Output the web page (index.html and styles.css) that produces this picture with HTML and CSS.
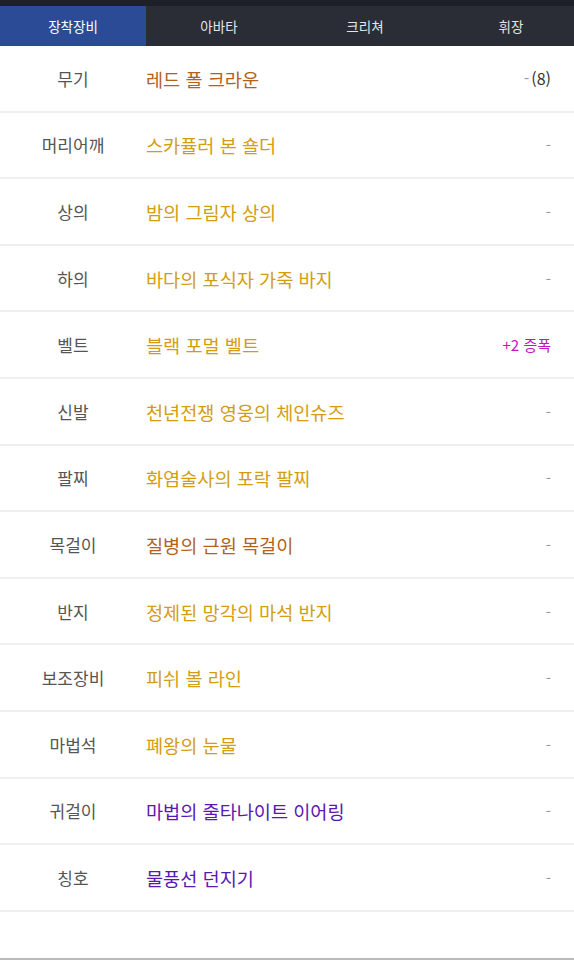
FILE: index.html
```html
<!DOCTYPE html>
<html lang="ko">
<head>
<meta charset="UTF-8">
<meta name="viewport" content="width=device-width, initial-scale=1.0">
<title>장착장비</title>
<link rel="stylesheet" href="styles.css">
</head>
<body>
<div class="top-deco"></div>
<div class="tabs">
  <div class="tab active">장착장비</div>
  <div class="tab">아바타</div>
  <div class="tab">크리쳐</div>
  <div class="tab">휘장</div>
</div>
<div class="equip-list">
  <div class="row">
    <div class="slot">무기</div>
    <div class="name unique">레드 폴 크라운</div>
    <div class="extra dark"><span class="dash">-</span>(8)</div>
  </div>
  <div class="row">
    <div class="slot">머리어깨</div>
    <div class="name epic">스카퓰러 본 숄더</div>
    <div class="extra">-</div>
  </div>
  <div class="row">
    <div class="slot">상의</div>
    <div class="name epic">밤의 그림자 상의</div>
    <div class="extra">-</div>
  </div>
  <div class="row">
    <div class="slot">하의</div>
    <div class="name epic">바다의 포식자 가죽 바지</div>
    <div class="extra">-</div>
  </div>
  <div class="row">
    <div class="slot">벨트</div>
    <div class="name epic">블랙 포멀 벨트</div>
    <div class="extra amp">+2 증폭</div>
  </div>
  <div class="row">
    <div class="slot">신발</div>
    <div class="name epic">천년전쟁 영웅의 체인슈즈</div>
    <div class="extra">-</div>
  </div>
  <div class="row">
    <div class="slot">팔찌</div>
    <div class="name epic">화염술사의 포락 팔찌</div>
    <div class="extra">-</div>
  </div>
  <div class="row">
    <div class="slot">목걸이</div>
    <div class="name unique">질병의 근원 목걸이</div>
    <div class="extra">-</div>
  </div>
  <div class="row">
    <div class="slot">반지</div>
    <div class="name epic">정제된 망각의 마석 반지</div>
    <div class="extra">-</div>
  </div>
  <div class="row">
    <div class="slot">보조장비</div>
    <div class="name epic">피쉬 볼 라인</div>
    <div class="extra">-</div>
  </div>
  <div class="row">
    <div class="slot">마법석</div>
    <div class="name epic">폐왕의 눈물</div>
    <div class="extra">-</div>
  </div>
  <div class="row">
    <div class="slot">귀걸이</div>
    <div class="name rare">마법의 줄타나이트 이어링</div>
    <div class="extra">-</div>
  </div>
  <div class="row">
    <div class="slot">칭호</div>
    <div class="name rare">물풍선 던지기</div>
    <div class="extra">-</div>
  </div>
</div>
<div class="bottom-space"></div>
</body>
</html>
```

FILE: styles.css
```css
body {
  margin: 0;
  padding: 0;
  background-color: #fff;
  font-family: "Noto Sans CJK KR", "Noto Sans", sans-serif;
  overflow: hidden;
}
.top-deco {
  height: 6px;
  background-color: #1d2027;
}
.tabs {
  display: flex;
  height: 40px;
  background-color: #2a2d35;
  overflow: hidden;
}
.tab {
  flex: 0 0 146px;
  display: flex;
  align-items: center;
  justify-content: center;
  color: #e4e6ea;
  font-size: 13.5px;
}
.tab.active {
  background-color: #2c4b96;
  color: #fff;
}
.row {
  box-sizing: border-box;
  height: 66.6px;
  display: flex;
  align-items: center;
  border-bottom: 2px solid #efefef;
}
.slot {
  flex: 0 0 146px;
  text-align: center;
  color: #555;
  font-size: 17px;
}
.name {
  flex: 1;
  font-size: 18.6px;
}
.name.unique {
  color: #b5611b;
}
.name.epic {
  color: #d39d12;
}
.name.rare {
  color: #5a17b4;
}
.extra {
  padding-right: 23px;
  color: #999;
  font-size: 15px;
}
.extra.dark {
  color: #333;
  font-size: 16px;
}
.extra .dash {
  color: #999;
  margin-right: 2px;
}
.extra.amp {
  color: #c414c0;
}
.bottom-space {
  height: 46px;
  border-bottom: 2px solid #bbb;
}
```
